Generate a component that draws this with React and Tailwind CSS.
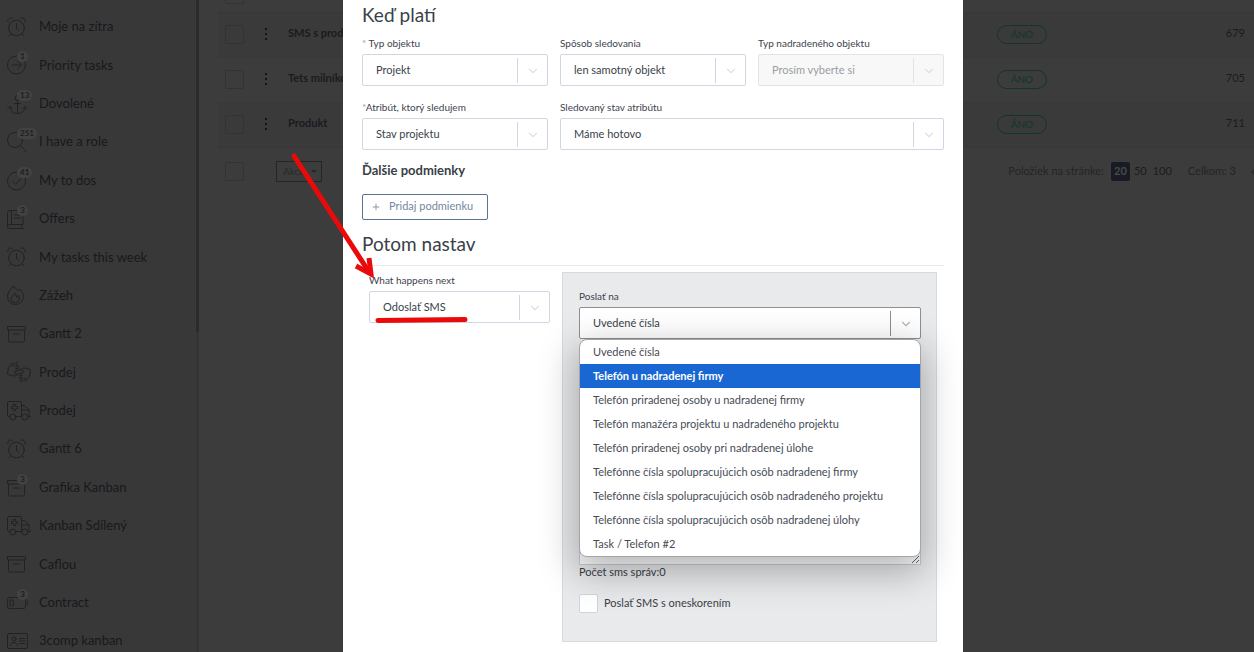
import { Plus, ChevronDown, ChevronLeft } from "lucide-react";

const icons = {
  clock: (
    <>
      <circle cx="9.5" cy="12" r="7.8" />
      <path d="M9.5 7.5v5l2.5 2M4 17.5 2 20M15 17.5l2 2.5M1 6C-.2 3.5 3 .5 5.500 2.500M18 6C19.200 3.500 16 .5 13.500 2.500" />
    </>
  ),
  arrow: (
    <>
      <circle cx="9.500" cy="11" r="9" />
      <path d="M5 11h9M10.500 7l4 4-4 4" />
    </>
  ),
  anchor: (
    <>
      <circle cx="10.500" cy="5" r="2.500" />
      <path d="M10.500 7.500V20.500M7.500 10.500h6M.5 16l2.500-2.500L5.500 16M15.500 16l2.500-2.500 2.500 2.500M3 14c0 4 3 6.500 7.500 6.500S18 18 18 14" />
    </>
  ),
  search: (
    <>
      <circle cx="8" cy="9" r="7.500" />
      <path d="m13.500 14.500 5.500 6" />
    </>
  ),
  check: (
    <>
      <circle cx="9.500" cy="11" r="9" />
      <path d="m5.500 11.500 3 3 5.500-6" />
    </>
  ),
  book: (
    <path d="M2.500 2.500h13.500v14H2.500a2 2 0 0 0 0 4h14M2.500 2.500a2 2 0 0 0-2 2v14M4.500 2.500v14M7.500 7h6M7.500 10h6M15 16.500v4" />
  ),
  fire: (
    <>
      <path d="M6 1.500C3.500 4 .5 7.500.5 11.500a8 8 0 0 0 16 0c0-2.500-1.500-5.500-3.500-7.500-.8.700-1.300 1.300-1.800 2C10 4.300 8.300 2.800 6 1.500Z" />
      <path d="M8 8.500c-2 2-4 3.500-4 5.500a4.300 4.300 0 0 0 8.500 0c0-1.500-.6-2.600-1.300-3.500l-1.200 1.500Z" />
    </>
  ),
  box: (
    <>
      <rect x=".5" y="3.500" width="18" height="3.500" rx=".5" />
      <path d="M1.500 7v10.500a1.500 1.500 0 0 0 1.500 1.500h13a1.500 1.500 0 0 0 1.500-1.500V7M6.500 11h6" />
    </>
  ),
  hands: (
    <>
      <path d="m.5 13 1-6.500 3-4c.8-1 2-.2 1.600.8L5 5.500l4-4c1-.8 2.200.2 1.500 1.200L8.500 5.500l2-.8c1.200-.4 1.800 1 .8 1.500L8.500 8l3-.2c1.300 0 1.300 1.600.2 1.800L9 10c-1.500 0-2 .8-2 1.500s.8 1.300 2 1c1.500-.3 2 1 1 1.600-2 1-3.500.8-5 .6Z" />
      <path d="m23.500 9-1 6.500-3 4c-.8 1-2 .2-1.600-.8l1.100-2.200-4 4c-1 .8-2.200-.2-1.500-1.200l2-2.800-2 .8c-1.200.4-1.800-1-.8-1.500l2.800-1.800-3 .2c-1.300 0-1.300-1.600-.2-1.800L15 12c1.500 0 2-.8 2-1.500s-.8-1.300-2-1c-1.500.3-2-1-1-1.600 2-1 3.500-.8 5-.6Z" />
    </>
  ),
  truck: (
    <>
      <path d="M2.500 16.500h-.5a1.500 1.500 0 0 1-1.500-1.500V3A1.500 1.500 0 0 1 2 1.500h11A1.500 1.500 0 0 1 14.500 3v13.500H9M14.500 5.500h3l4.500 4.500v6.500h1.500M14.500 10H22" />
      <path d="M6.500 4.500h2v2h2v2h-2v2h-2v-2h-2v-2h2Z" />
      <circle cx="5.800" cy="17" r="3" />
      <circle cx="17.800" cy="17" r="3" />
    </>
  ),
  battery: (
    <>
      <rect x=".5" y="5.500" width="18" height="11" rx="2" />
      <rect x="3" y="8" width="3.500" height="6" rx=".5" />
      <path d="M20.500 9v4" />
    </>
  ),
  card: (
    <>
      <rect x=".5" y="3.500" width="20" height="15" rx="1.500" />
      <circle cx="7" cy="9" r="2" />
      <path d="M3.500 15.500c0-2 1.500-3 3.500-3s3.500 1 3.500 3M12.500 8.500h5.500M12.500 11h5.500M12.500 13.500h5.500" />
    </>
  ),
};

const menu = [
  ["clock", "Moje na zítra"],
  ["arrow", "Priority tasks", "1"],
  ["anchor", "Dovolené", "13"],
  ["search", "I have a role", "251"],
  ["check", "My to dos", "41"],
  ["book", "Offers", "3"],
  ["clock", "My tasks this week"],
  ["fire", "Zážeh"],
  ["box", "Gantt 2"],
  ["hands", "Prodej"],
  ["truck", "Prodej"],
  ["clock", "Gantt 6"],
  ["box", "Grafika Kanban", "3"],
  ["truck", "Kanban Sdílený"],
  ["box", "Caflou"],
  ["battery", "Contract", "3"],
  ["card", "3comp kanban"],
];

const rules = [
  { name: "SMS s produktom", id: 679 },
  { name: "Tets milníkov", id: 705 },
  { name: "Produkt", id: 711 },
];

const recipients = [
  "Uvedené čísla",
  "Telefón u nadradenej firmy",
  "Telefón priradenej osoby u nadradenej firmy",
  "Telefón manažéra projektu u nadradeného projektu",
  "Telefón priradenej osoby pri nadradenej úlohe",
  "Telefónne čísla spolupracujúcich osôb nadradenej firmy",
  "Telefónne čísla spolupracujúcich osôb nadradeného projektu",
  "Telefónne čísla spolupracujúcich osôb nadradenej úlohy",
  "Task / Telefon #2",
];

function Sidebar() {
  return (
    <nav className="relative w-[199px] shrink-0 bg-[#383838] border-r-3 border-[#343434]">
      <ul className="min-h-screen flex flex-col justify-between pt-4 pl-[7px]">
        {menu.map(([icon, label, count], idx) => (
          <li key={idx}>
            <a href="#" className="relative flex items-center gap-2 h-[22px] text-[13px] text-[#17191d]">
              <svg
                viewBox="0 0 24 22"
                className="w-6 h-[22px] overflow-visible"
                fill="none"
                stroke="#202224"
                strokeLinecap="round"
                strokeLinejoin="round"
              >
                {icons[icon]}
              </svg>
              {count && (
                <span className="absolute left-[10px] -top-[3px] h-[11px] min-w-[11px] px-[3px] rounded-full bg-[#424242] text-[8px] leading-[11px] font-bold text-center text-[#1c1e22]">
                  {count}
                </span>
              )}
              {label}
            </a>
          </li>
        ))}
      </ul>
      <span className="absolute top-0 -right-[3px] w-[3px] h-[332px] rounded-b bg-[#2b2b2b]" />
    </nav>
  );
}

function DarkCheckbox({ label }) {
  return (
    <input
      type="checkbox"
      aria-label={label}
      className="block appearance-none w-[19px] h-[19px] ml-[7px] rounded-xs border border-[#323336]"
    />
  );
}

function RuleTable() {
  return (
    <main className="flex-1 min-w-0 pl-[19px] overflow-hidden bg-[#3c3c3c]">
      <table className="-mt-[22px] w-full table-fixed text-[11px] text-[#191b1f]">
        <colgroup>
          <col className="w-[39px]" />
          <col className="w-[31px]" />
          <col />
          <col className="w-[190px]" />
          <col className="w-[67px]" />
        </colgroup>
        <thead>
          <tr className="h-[34px] border-b border-[#373737]">
            <th colSpan={5}>
              <DarkCheckbox label="Vybrať všetko" />
            </th>
          </tr>
        </thead>
        <tbody>
          {rules.map((rule) => (
            <tr key={rule.id} className="h-[45px] border-b border-[#373737] odd:bg-[#3a3a3a]">
              <td>
                <DarkCheckbox label={rule.name} />
              </td>
              <td className="pb-[2px]">
                <button aria-label="Menu" className="flex flex-col gap-[3px] w-[18px] items-center">
                  <span className="size-[2px] bg-[#141414]" />
                  <span className="size-[2px] bg-[#141414]" />
                  <span className="size-[2px] bg-[#141414]" />
                </button>
              </td>
              <td className="pb-[2px] font-bold whitespace-nowrap">{rule.name}</td>
              <td>
                <span className="block w-[50px] h-[19px] rounded-full border border-[#12352b] text-center text-[10px] leading-[17px] text-[#12352b]">
                  ÁNO
                </span>
              </td>
              <td className="pb-[2px] pr-[9px] text-right">{rule.id}</td>
            </tr>
          ))}
        </tbody>
      </table>

      <div className="flex items-center h-[48px] text-[11px]">
        <DarkCheckbox label="Vybrať stránku" />
        <button className="flex items-center gap-1 ml-8 w-[46px] h-[21px] px-[6px] border border-[#232528] text-[10px] text-[#27292c]">
          Akcia
          <span className="border-x-3 border-t-3 border-x-transparent border-t-[#232528]" />
        </button>
        <div className="ml-auto flex items-center text-[#1b1d20]">
          <span className="text-[#232527]">Položiek na stránke:</span>
          <button className="ml-[7px] w-[19px] h-[19px] rounded-xs bg-[#181b24] font-bold text-[#4a4a4a]">20</button>
          <button className="ml-1">50</button>
          <button className="ml-[6px]">100</button>
          <span className="ml-4 text-[#232527]">Celkom: 3</span>
          <ChevronLeft size={16} className="ml-[10px] -mr-[8px] text-[#2a2a2a]" />
        </div>
      </div>
    </main>
  );
}

function Select({ id, label, required, value, disabled, open, children }) {
  const line = open ? "border-[#8c8e91]" : disabled ? "border-[#e2e4ea]" : "border-[#d0d7e2]";
  return (
    <div className="relative">
      <label htmlFor={id} className="block h-5 text-[10px] leading-[18px] text-[#3d434d]">
        {required && <span className="text-[#9a9fa8]">{required}</span>}
        {label}
      </label>
      <div className="relative">
        <select
          id={id}
          disabled={disabled}
          defaultValue={value}
          className={`block appearance-none w-full h-8 pl-[13px] pr-8 rounded-xs border text-[11px] ${line} ${
            disabled ? "bg-[#f8f8f8] text-[#999da4] opacity-100" : "bg-white text-[#3a3f48]"
          }`}
        >
          <option>{value}</option>
        </select>
        <span
          className={`absolute right-0 top-1 bottom-[3px] w-[31px] flex items-center justify-center border-l pointer-events-none ${line}`}
        >
          <ChevronDown size={14} strokeWidth={2} className={open ? "text-[#b4b6b9]" : "text-[#dde0e7]"} />
        </span>
      </div>
      {children}
    </div>
  );
}

function RecipientList() {
  return (
    <ul
      role="listbox"
      className="absolute z-10 top-full left-0 right-0 rounded-lg border border-[#a3a5a7] bg-white overflow-hidden text-[11px] leading-6 text-[#454b55] shadow-[0_12px_36px_4px_rgba(0,0,0,0.28)]"
    >
      {recipients.map((text, idx) => (
        <li
          key={text}
          role="option"
          aria-selected={idx === 1}
          className={`h-6 px-[13px] ${idx === 1 ? "bg-[#1967d2] font-bold text-white" : ""}`}
        >
          {text}
        </li>
      ))}
    </ul>
  );
}

function RuleDialog() {
  return (
    <div role="dialog" className="relative w-[620px] min-h-screen px-[19px] bg-white text-[#3a3f48] overflow-hidden">
      <h2 className="pt-[3px] text-[19px] leading-6">Keď platí</h2>
      <div className="grid grid-cols-3 gap-3 mt-[7px]">
        <Select id="type" required="* " label="Typ objektu" value="Projekt" />
        <Select id="watch" label="Spôsob sledovania" value="len samotný objekt" />
        <Select id="parent" label="Typ nadradeného objektu" value="Prosím vyberte si" disabled />
        <Select id="attr" required="*" label="Atribút, ktorý sledujem" value="Stav projektu" />
        <div className="col-span-2">
          <Select id="state" label="Sledovaný stav atribútu" value="Máme hotovo" />
        </div>
      </div>

      <h3 className="mt-[11px] text-[13px] leading-[18px] font-bold">Ďalšie podmienky</h3>
      <button className="flex items-center gap-2 mt-[15px] h-[26px] px-2 pb-px w-[126px] border border-[#5b7296] rounded-xs text-[11px] text-[#75879f]">
        <Plus size={10} />
        Pridaj podmienku
      </button>

      <h2 className="mt-3 pb-[9px] border-b border-[#e8e9eb] text-[19px] leading-6">Potom nastav</h2>

      <div className="flex items-start gap-3 mt-[6px] px-[7px]">
        <div className="w-[181px] -mt-px">
          <Select id="action" label="What happens next" value="Odoslať SMS" />
        </div>
        <div className="flex-1 h-[370px] pl-4 pr-[15px] pt-[14px] border border-[#d8d9db] bg-[#e9eaec]">
          <Select id="recipient" label="Poslať na" value="Uvedené čísla" open>
            <RecipientList />
          </Select>
          <textarea
            aria-label="Text SMS"
            className="block mt-[86px] w-full h-[140px] border border-[#c6cedb] bg-white resize-y"
          />
          <p className="text-[11px] leading-[14px]">Počet sms správ:0</p>
          <label className="flex items-center gap-[6px] mt-[15px] text-[11px]">
            <input type="checkbox" className="appearance-none size-[19px] border border-[#cdd5e1] rounded-xs bg-white" />
            Poslať SMS s oneskorením
          </label>
        </div>
      </div>
    </div>
  );
}

export default function App() {
  return (
    <div className="relative min-h-screen flex overflow-hidden font-['Lato',sans-serif]">
      <Sidebar />
      <RuleTable />

      <div className="absolute inset-0 flex justify-center pl-[52px]">
        <RuleDialog />
      </div>

      {/* Hand-drawn pointer and underline */}
      <svg
        viewBox="285 150 190 180"
        className="absolute left-[285px] top-[150px] w-[190px] h-[180px] pointer-events-none"
        fill="none"
        stroke="#ea0a0a"
        strokeWidth="5"
      >
        <path d="M294 156 369 272" strokeLinecap="round" />
        <path d="m356 266 15 8-2-16" />
        <path d="M378 320.500 465 319.500" strokeLinecap="round" />
      </svg>
    </div>
  );
}
